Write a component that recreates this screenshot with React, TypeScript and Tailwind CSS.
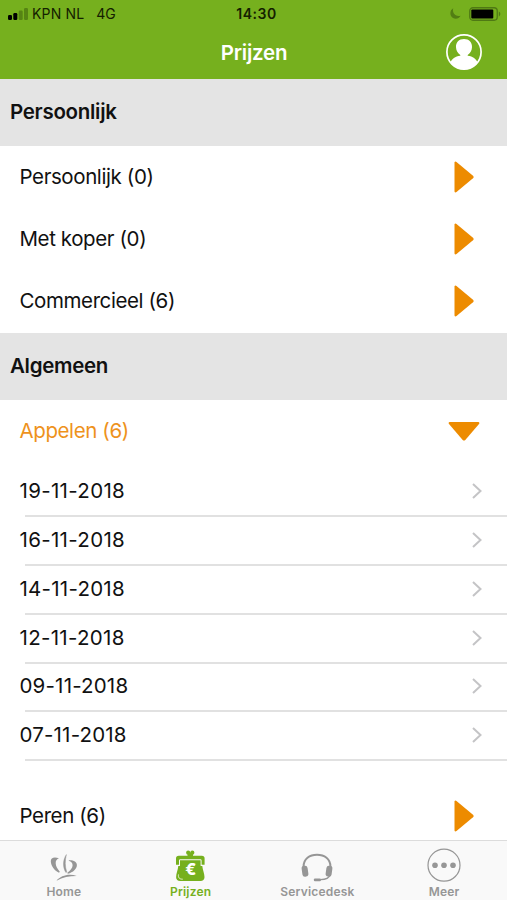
import type { ReactNode } from "react";
import clsx from "clsx";

interface Category {
  label: string;
  count: number;
}

interface PriceDate {
  label: string;
  spacing: string;
}

const PERSONAL: Category[] = [
  { label: "Persoonlijk", count: 0 },
  { label: "Met koper", count: 0 },
  { label: "Commercieel", count: 6 },
];

const DATES: PriceDate[] = [
  { label: "19-11-2018", spacing: "tracking-[0.32px]" },
  { label: "16-11-2018", spacing: "tracking-[0.32px]" },
  { label: "14-11-2018", spacing: "tracking-[0.25px]" },
  { label: "12-11-2018", spacing: "tracking-[0.3px]" },
  { label: "09-11-2018", spacing: "tracking-[0.18px]" },
  { label: "07-11-2018", spacing: "tracking-[0.18px]" },
];

export default function App() {
  return (
    <div className="flex h-[900px] w-[507px] flex-col overflow-hidden bg-white font-[Inter,sans-serif] text-[#111]">
      <header className="h-[79px] shrink-0 bg-[#76b01e]">
        <StatusBar />
        <NavBar />
      </header>

      <main className="min-h-0 flex-1 overflow-hidden">
        <SectionHeader>Persoonlijk</SectionHeader>
        <div className="h-[187px]">
          {PERSONAL.map((item) => (
            <CategoryRow key={item.label} item={item} />
          ))}
        </div>

        <SectionHeader>Algemeen</SectionHeader>
        <CategoryRow item={{ label: "Appelen", count: 6 }} open />
        <ul className="pt-[6px]">
          {DATES.map((date) => (
            <li key={date.label} className="flex h-[48.8px] flex-col">
              <div className="flex flex-1 items-center justify-between pr-[25px] pb-px pl-[19.5px]">
                <span className={clsx("text-[20.5px] leading-6", date.spacing)}>{date.label}</span>
                <svg className="h-4 w-[10px]" viewBox="0 0 10 16" fill="none" stroke="#c4c4c6" strokeWidth={2}>
                  <path d="M1 1l7.5 7L1 15" />
                </svg>
              </div>
              <div className="ml-[25px] h-[2px] bg-[#e1e1e1]" />
            </li>
          ))}
        </ul>
        <div className="pt-6">
          <CategoryRow item={{ label: "Peren", count: 6 }} />
        </div>
      </main>

      <TabBar />
    </div>
  );
}

function StatusBar() {
  return (
    <div className="grid h-[27px] grid-cols-3 items-center pr-[6px] pl-2 text-[14px] leading-none text-[#142000]">
      <div className="flex items-center">
        <svg className="h-3 w-5 shrink-0" viewBox="0 0 20 12">
          <rect x="0" y="7" width="4" height="5" rx="1.2" />
          <rect x="5.3" y="5" width="4" height="7" rx="1.2" />
          <rect x="10.7" y="2.5" width="4" height="9.5" rx="1.2" fill="#568413" />
          <rect x="16" y="0" width="4" height="12" rx="1.2" fill="#568413" />
        </svg>
        <span className="ml-1 pt-px tracking-[0.15px] whitespace-nowrap">KPN NL</span>
        <span className="ml-3 pt-px">4G</span>
      </div>
      <span className="pt-px pl-1 text-center font-semibold tracking-[0.55px]">14:30</span>
      <div className="flex items-center justify-end gap-2">
        <svg className="h-[11px] w-[11px]" viewBox="0 0 11 11" fill="#527e13">
          <path d="M3.3 0.3C-0.5 2.2-0.6 7.8 3 9.9 5.8 11.5 9.3 10.4 10.6 7.7 5.8 9.2 1.8 5.2 3.3.3Z" />
        </svg>
        <svg className="h-[14px] w-8" viewBox="0 0 32 14">
          <rect x="0.75" y="0.75" width="27.5" height="12.5" rx="3.2" fill="none" stroke="#4f7914" strokeWidth="1.3" />
          <rect x="2.3" y="2.5" width="22" height="9" rx="1" fill="#000" />
          <path d="M29.8 4.6c2 .8 2 4 0 4.8Z" fill="#4f7914" />
        </svg>
      </div>
    </div>
  );
}

function NavBar() {
  return (
    <div className="grid h-[50px] grid-cols-[1fr_auto_1fr] items-center px-[25px]">
      <h1 className="col-start-2 pt-[2px] pl-px text-[20.5px] leading-6 font-semibold tracking-[-0.25px] text-white">
        Prijzen
      </h1>
      <button className="justify-self-end" aria-label="Account">
        <svg className="h-9 w-9" viewBox="0 0 36 36">
          <circle cx="18" cy="18" r="17.1" fill="none" stroke="#fff" strokeWidth="1.7" />
          <path
            d="M18 5c-5 0-8.3 3.5-8 8.3.2 3.4 1.8 6 4.3 7.6v.8C9 22.5 6 24.5 4.3 28.6 7.5 33 12.5 35.5 18 35.5S28.5 33 31.7 28.6C30 24.5 27 22.5 21.7 21.7v-.8c2.5-1.6 4.1-4.2 4.3-7.6C26.300 8.500 23 5 18 5Z"
            fill="#fff"
          />
        </svg>
      </button>
    </div>
  );
}

function SectionHeader({ children }: { children: ReactNode }) {
  return (
    <h2 className="flex h-[67px] items-center bg-[#e4e4e4] pl-[10px] text-[20.5px] font-semibold tracking-[-0.3px]">
      {children}
    </h2>
  );
}

function CategoryRow({ item, open }: { item: Category; open?: boolean }) {
  return (
    <div
      className={clsx("flex h-[62.4px] items-center justify-between pr-[27px] pl-[19.5px]", !open && "pb-px")}
    >
      <span className={clsx("text-[20.5px] leading-6 tracking-[-0.4px]", open && "text-[#ee921c]")}>
        {item.label} ({item.count})
      </span>
      {open ? (
        <svg className="h-[19px] w-8" viewBox="0 0 32 19" fill="#ed8b00">
          <path d="M1.5 0H30.5q1.5.7.5 2L17.3 18q-1.3 1.2-2.6 0L1 2Q0 .7 1.5 0Z" />
        </svg>
      ) : (
        <svg className="mr-[6px] h-8 w-5" viewBox="0 0 20 32" fill="#ed8b00">
          <path d="M.5 1.5Q1 0 2.5 1L19 14.7q1.3 1.3 0 2.6L2.5 31Q1 32 .5 30.5Z" />
        </svg>
      )}
    </div>
  );
}

function TabBar() {
  return (
    <nav className="grid h-[60px] shrink-0 grid-cols-4 border-t border-[#dcdcdc] bg-[#f9f9f9] text-[#969696]">
      <Tab label="Home">
        <svg className="ml-px h-9 w-9" viewBox="0 0 36 36" fill="currentColor">
          <path d="M13 8.3C8.5 6.5 4.5 7.5 4.8 11.5c.4 4.600 3.600 9 8.200 11.300l.8-1C11.300 18.800 9.800 16.200 9.700 13.300 9.600 10.800 10.700 9.300 13 8.300Z" />
          <path
            d="M20.400 4.500C16.700 10 16.500 17 19.900 22.600l.9-.5C18.900 16.500 18.900 10.500 20.400 4.500Z"
            stroke="currentColor"
            strokeWidth="0.4"
          />
          <path d="M22.800 10.200c4.700-.3 8.100 1.500 8.100 4.700 0 3.900-3.700 7.300-9.100 8.800l-.5-1c3.300-2.300 5.300-4.800 5.300-7.400 0-2-1.300-3.600-3.800-4.500Z" />
          <path d="M10.500 30.800c4.300-5.500 13-7.500 20.200-4.700-7.500.1-14 1.200-20.200 4.700Z" />
        </svg>
      </Tab>
      <Tab label="Prijzen" active>
        <svg className="h-9 w-9" viewBox="0 0 36 36" fill="currentColor">
          <circle cx="16.2" cy="2.7" r="2.1" />
          <circle cx="20.3" cy="2.7" r="2.1" />
          <path d="M15.500 2.500h5.500v4h-5.500z" />
          <path d="M6.800 5.800h23Q32.600 5.800 32.600 8.600v6.200h-3V10.600q0-1.300-1.300-1.300H8.300Q7 9.300 7 10.600v4.200H4V8.600Q4 5.800 6.800 5.800Z" />
          <path d="M8 10.200h20.600v5.800h1.700c.4 4 2.200 7.500 2.200 11.300 0 2.400-1.600 3.700-4 3.700H8.100c-2.400 0-4-1.300-4-3.700 0-3.800 1.800-7.300 2.200-11.300H8Z" />
          <path d="M6.500 24.500c-.5 3 .8 4.700 4.200 4.700" fill="none" stroke="#e8f2da" strokeWidth="1" />
          <text x="18.7" y="24.6" textAnchor="middle" fontSize="16" fontWeight="800" fill="#fff">
            €
          </text>
        </svg>
      </Tab>
      <Tab label="Servicedesk">
        <svg className="h-9 w-9" viewBox="0 0 36 36" fill="currentColor">
          <path d="M4.6 18V16.5C4.6 9 10.5 4.8 18 4.8S31.4 9 31.4 16.5V18" fill="none" stroke="currentColor" strokeWidth="2" />
          <rect x="3" y="15.7" width="6" height="11" rx="2.7" transform="rotate(-8 6 21.2)" />
          <rect x="27" y="15.7" width="6" height="11" rx="2.7" transform="rotate(8 30 21.2)" />
          <path d="M31 25c-.8 3.200-4 4.500-9.500 4.700" fill="none" stroke="currentColor" strokeWidth="1.2" />
          <rect x="14.8" y="28.4" width="7.2" height="2.8" rx="1.2" />
        </svg>
      </Tab>
      <Tab label="Meer">
        <svg className="h-9 w-9" viewBox="0 0 36 36" fill="currentColor">
          <circle cx="18" cy="15.2" r="16" fill="none" stroke="currentColor" strokeWidth="1.2" />
          <circle cx="9" cy="15.3" r="2.8" />
          <circle cx="18" cy="15.3" r="2.8" />
          <circle cx="27" cy="15.3" r="2.8" />
        </svg>
      </Tab>
    </nav>
  );
}

function Tab({ label, active, children }: { label: string; active?: boolean; children: ReactNode }) {
  return (
    <button className={clsx("flex flex-col items-center pt-[9px] [&_svg]:overflow-visible", active && "text-[#76b01e]")}>
      {children}
      <span className="pl-px text-[12px] leading-3 font-semibold tracking-[0.2px]">{label}</span>
    </button>
  );
}
